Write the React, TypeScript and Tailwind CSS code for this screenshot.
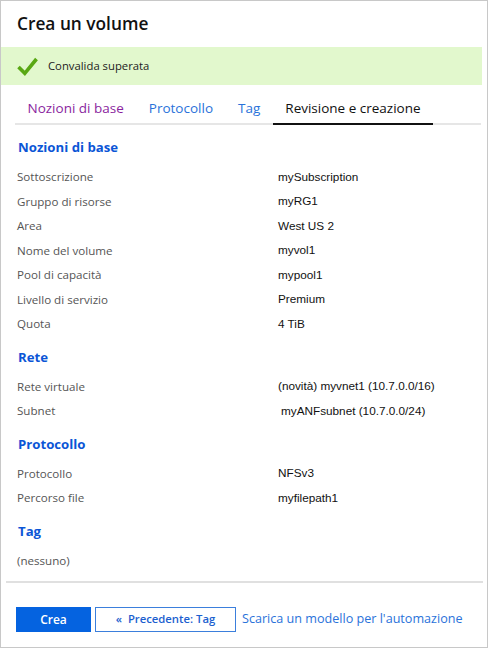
import { ReactNode } from "react";

const LABEL_FONT = "font-['Open_Sans',sans-serif]";
const VALUE_FONT = "font-['Liberation_Sans',Arial,sans-serif]";

type Row = { label: string; value: string; indent?: boolean };

const SECTIONS: { title: string; rows: Row[]; empty?: string }[] = [
  {
    title: "Nozioni di base",
    rows: [
      { label: "Sottoscrizione", value: "mySubscription" },
      { label: "Gruppo di risorse", value: "myRG1" },
      { label: "Area", value: "West US 2" },
      { label: "Nome del volume", value: "myvol1" },
      { label: "Pool di capacità", value: "mypool1" },
      { label: "Livello di servizio", value: "Premium" },
      { label: "Quota", value: "4 TiB" },
    ],
  },
  {
    title: "Rete",
    rows: [
      { label: "Rete virtuale", value: "(novità) myvnet1 (10.7.0.0/16)" },
      { label: "Subnet", value: "myANFsubnet (10.7.0.0/24)", indent: true },
    ],
  },
  {
    title: "Protocollo",
    rows: [
      { label: "Protocollo", value: "NFSv3" },
      { label: "Percorso file", value: "myfilepath1" },
    ],
  },
  { title: "Tag", rows: [], empty: "(nessuno)" },
];

const TABS = [
  { label: "Nozioni di base", cls: "text-[#8a1f9e]" },
  { label: "Protocollo", cls: "text-[#2a72da]" },
  { label: "Tag", cls: "text-[#2a72da]" },
  { label: "Revisione e creazione", cls: "-mb-[2px] border-b-2 border-[#111] text-[#111]" },
];

function Section({ title, children }: { title: string; children: ReactNode }) {
  return (
    <div className="mb-[8.5px]">
      <h3 className={`${LABEL_FONT} mb-[5.5px] pl-[17px] text-[13.2px] font-bold leading-[24px] text-[#0b55d6]`}>
        {title}
      </h3>
      {children}
    </div>
  );
}

export default function App() {
  return (
    <div className="h-[648px] w-[489px] bg-white">
      <div className="relative flex h-[648px] w-[488px] flex-col border border-[#c8c8c8]">
        <div className="flex h-[46px] shrink-0 items-center pl-[16px]">
          <h1 className={`${LABEL_FONT} text-[17.3px] font-semibold text-[#111]`}>Crea un volume</h1>
        </div>

        <div className="mr-[5px] flex h-[38px] shrink-0 items-center gap-[10px] bg-[#e2f8cd] pl-[16px]">
          <svg width="21" height="19" viewBox="0 0 21 19">
            <path d="M1.5 10 L7.8 16.3 L19.5 2" fill="none" stroke="#59a813" strokeWidth="3.6" />
          </svg>
          <span className={`${LABEL_FONT} text-[11.3px] text-[#222]`}>Convalida superata</span>
        </div>

        <div className="ml-[14px] mr-[6px] flex h-[40px] shrink-0 items-end border-b-2 border-[#e6e6e6]">
          <div className={`${LABEL_FONT} flex text-[13.5px] leading-[30px]`}>
            {TABS.map((t) => (
              <span key={t.label} className={`px-[12.5px] ${t.cls}`}>
                {t.label}
              </span>
            ))}
          </div>
        </div>

        <div className="shrink-0 pt-[10px]">
          {SECTIONS.map((s) => (
            <Section key={s.title} title={s.title}>
              {s.rows.map((r) => (
                <div key={r.label} className="flex h-[24.5px] items-center">
                  <div className={`${LABEL_FONT} w-[277px] pl-[16px] text-[11.6px] text-[#555]`}>{r.label}</div>
                  <div className={`${VALUE_FONT} text-[11.75px] text-[#111] ${r.indent ? "pl-[3px]" : ""}`}>
                    {r.value}
                  </div>
                </div>
              ))}
              {s.empty && (
                <div className={`${LABEL_FONT} flex h-[24.5px] items-center pl-[16px] text-[11.6px] text-[#555]`}>
                  {s.empty}
                </div>
              )}
            </Section>
          ))}
        </div>

        <div className="ml-[5px] mr-[4px] shrink-0 border-t-2 border-[#e0e0e0]" />
        <div className="flex shrink-0 items-center pb-[14px] pl-[15px] pt-[24px]">
          <button className={`${LABEL_FONT} h-[25px] w-[75px] bg-[#0563e0] text-[12px] font-semibold text-white`}>
            Crea
          </button>
          <button
            className={`${LABEL_FONT} ml-[4px] h-[25px] w-[141px] border border-[#3b7fdc] text-[11.3px] font-semibold text-[#1c5fcf]`}
          >
            « &nbsp;Precedente: Tag
          </button>
          <a className={`${LABEL_FONT} ml-[6px] text-[12.6px] text-[#2a72da]`}>Scarica un modello per l'automazione</a>
        </div>
      </div>
    </div>
  );
}
